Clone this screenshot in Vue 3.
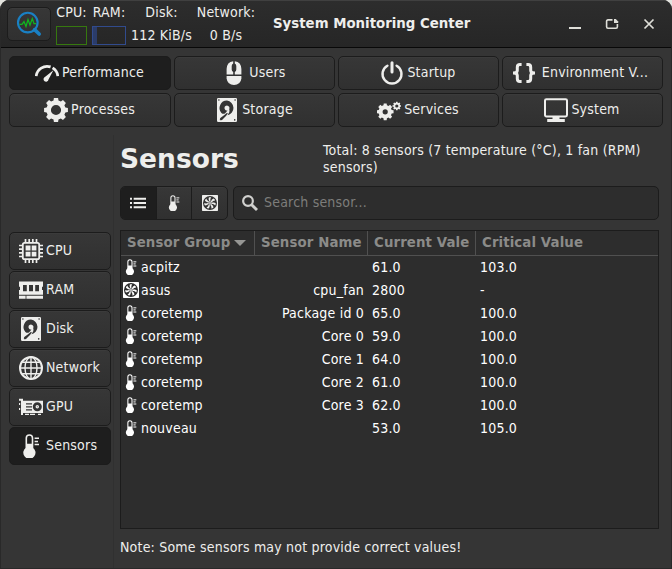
<script setup>
import { h } from 'vue'

const tabs = [
  { label: 'Performance', icon: 'gauge', active: true },
  { label: 'Users', icon: 'mouse' },
  { label: 'Startup', icon: 'power' },
  { label: 'Environment V...', icon: 'braces', wide: true },
  { label: 'Processes', icon: 'gear' },
  { label: 'Storage', icon: 'disk' },
  { label: 'Services', icon: 'gears' },
  { label: 'System', icon: 'monitor' },
]
const side = [
  { label: 'CPU', icon: 'cpu' },
  { label: 'RAM', icon: 'ram' },
  { label: 'Disk', icon: 'disk' },
  { label: 'Network', icon: 'globe' },
  { label: 'GPU', icon: 'gpu' },
  { label: 'Sensors', icon: 'thermo', active: true },
]
const rows = [
  ['acpitz', '', '61.0', '103.0'],
  ['asus', 'cpu_fan', '2800', '-'],
  ['coretemp', 'Package id 0', '65.0', '100.0'],
  ['coretemp', 'Core 0', '59.0', '100.0'],
  ['coretemp', 'Core 1', '64.0', '100.0'],
  ['coretemp', 'Core 2', '61.0', '100.0'],
  ['coretemp', 'Core 3', '62.0', '100.0'],
  ['nouveau', '', '53.0', '105.0'],
]

const fill = (d) => ['path', { d, fill: 'currentColor', 'fill-rule': 'evenodd' }]
const line = (d, w = 2, cap = 'butt') => [
  'path',
  { d, fill: 'none', stroke: 'currentColor', 'stroke-width': w, 'stroke-linecap': cap },
]
const ring = (cx, cy, r, w) => [
  'circle',
  { cx, cy, r, fill: 'none', stroke: 'currentColor', 'stroke-width': w },
]

// Closed outline of a cog with a round hole
function cog(cx, cy, outer, inner, hole, teeth = 8, phase = 0) {
  const pts = []
  const step = (Math.PI * 2) / teeth
  for (let i = 0; i < teeth; i++) {
    const a = i * step + phase
    for (const [o, r] of [[-0.33, inner], [-0.22, outer], [0.22, outer], [0.33, inner]]) {
      const t = a + o * step
      pts.push(`${(cx + r * Math.cos(t)).toFixed(2)} ${(cy + r * Math.sin(t)).toFixed(2)}`)
    }
  }
  return `M${pts.join('L')}ZM${cx - hole} ${cy}a${hole} ${hole} 0 1 0 ${hole * 2} 0a${hole} ${hole} 0 1 0 ${-hole * 2} 0Z`
}

const blades = Array.from({ length: 7 }, (_, i) => [
  'path',
  {
    d: 'M11.3 9.8C10.1 7.5 9.5 5.5 10.3 3.6C11.6 3.1 12.8 3.2 13.8 3.7C12.5 5.2 12.3 7.4 12.8 9.5Z',
    fill: 'currentColor',
    transform: `rotate(${(i * 360) / 7} 12 12)`,
  },
])

const icons = {
  gauge: [
    line('M1.2 15.2A11 11 0 0 1 15.6 5.9', 2.7),
    line('M17.6 6.8A11 11 0 0 1 22.8 15.2', 2.7),
    fill('M18.4 9.2L13.5 18.6A2.5 2.5 0 1 1 9.9 16Z'),
  ],
  mouse: [
    fill('M11.2 0.2V2.6Q9.7 3.3 9.7 5V8.4Q9.7 10.3 11.2 10.9V13.5H4.6V8Q4.8 1 11.2 0.2ZM12.8 0.2Q19.2 1 19.4 8V13.5H12.8V10.9Q14.3 10.3 14.3 8.4V5Q14.3 3.3 12.8 2.6Z'),
    fill('M4.6 15H19.4V17.5Q18.5 24 12 24Q5.5 24 4.6 17.5Z'),
  ],
  power: [line('M7.4 4.7A9.5 9.5 0 1 0 16.6 4.7', 2.4, 'round'), line('M12 1.8V11', 3, 'round')],
  braces: [
    line('M9.6 3.6H8Q5.3 3.6 5.3 6.3V9.5Q5.3 12 1 12Q5.3 12 5.3 14.5V17.7Q5.3 20.4 8 20.4H9.6', 3),
    line('M14.4 3.6H16Q18.7 3.6 18.7 6.3V9.5Q18.7 12 23 12Q18.7 12 18.7 14.5V17.7Q18.7 20.4 16 20.4H14.4', 3),
  ],
  gear: [fill(cog(12, 12, 12.1, 9.7, 5.1))],
  gears: [fill(cog(8.2, 13.8, 8.5, 6.7, 2.6)), fill(cog(19.8, 8, 4.4, 3.4, 1.6))],
  disk: [
    fill('M3.2 0H20.8Q22 0 22 1.2V22.8Q22 24 20.8 24H3.2Q2 24 2 22.8V1.2Q2 0 3.2 0ZM12 2.6A7.4 7.4 0 0 0 6.4 14.9Q8.4 16.6 10.2 15.2L12.5 12.5A2.5 2.5 0 1 1 14.2 11.2Q14.7 12.4 14.3 14.2L12.5 17.2A7.4 7.4 0 0 0 12 2.6ZM12 14.8Q9.2 17.5 5.3 20Q3.9 21.4 5.8 22.4Q7.5 22 8.5 20.5Q11 18.5 12.8 15.5ZM3.1 2A.8.8 0 1 0 4.7 2A.8.8 0 1 0 3.1 2ZM19.3 2A.8.8 0 1 0 20.9 2A.8.8 0 1 0 19.3 2ZM18.9 21.9A.8.8 0 1 0 20.5 21.9A.8.8 0 1 0 18.9 21.9Z'),
  ],
  monitor: [
    ['rect', { x: 1, y: 1.2, width: 22, height: 17.2, rx: 1.4, fill: 'none', stroke: 'currentColor', 'stroke-width': 2 }],
    fill('M8.5 18.5H15.5V21H20.8V24H3.2V21H8.5Z'),
  ],
  cpu: [
    line('M6.5 0V4M10.2 0V4M13.8 0V4M17.5 0V4M6.5 20V24M10.2 20V24M13.8 20V24M17.5 20V24M0 6.5H4M0 10.2H4M0 13.8H4M0 17.5H4M20 6.5H24M20 10.2H24M20 13.8H24M20 17.5H24', 1.7),
    ['rect', { x: 3.8, y: 3.8, width: 16.4, height: 16.4, rx: 1.8, fill: 'none', stroke: 'currentColor', 'stroke-width': 1.8 }],
    fill('M6.6 6.6H11.5V11.5H6.6ZM12.7 6.6H17.4V11.5H12.7ZM6.6 12.7H11.5V17.4H6.6ZM12.7 12.7H17.4V17.4H12.7Z'),
  ],
  ram: [
    fill('M0 3.5H24V8.8H23V12H24V16.7H0V12H1V8.8H0ZM4 7H7.8V13.3H4ZM10 7H14V13.3H10ZM16.2 7H20V13.3H16.2Z'),
    fill('M0 17.8H6.6V20.8H0ZM7.4 17.8H24V20.8H7.4Z'),
  ],
  globe: [
    ring(12, 12, 11, 2),
    line('M12 1V23M1 12H23M3.3 6.3H20.7M3.3 17.7H20.7', 1.4),
    ['ellipse', { cx: 12, cy: 12, rx: 6, ry: 11, fill: 'none', stroke: 'currentColor', 'stroke-width': 1.4 }],
  ],
  gpu: [
    fill('M0 3.8H4V5.7H24V18H4V20H2V5.7H0ZM7 8.2H13V9.5H7ZM7 11.2H13V12.5H7ZM7 14.2H13V15.5H7ZM18.3 7.2A4.5 4.5 0 1 0 18.3 16.2A4.5 4.5 0 1 0 18.3 7.2Z'),
    ring(18.3, 11.7, 1.1, 1.3),
    fill('M0 8H1.2V10H0ZM0 13H1.2V15H0ZM6 18.8H10V20H6ZM11 18.8H16V20H11ZM19 18.8H22V20H19Z'),
  ],
  thermo: [
    ['rect', { x: 7.3, y: 1, width: 6.2, height: 17, rx: 3.1, fill: 'none', stroke: 'currentColor', 'stroke-width': 1.6 }],
    fill('M7.4 9.7H13.4V13.4A6.1 6.1 0 1 1 7.4 13.4Z'),
    line('M15.6 4.3H20M15.6 7.4H19M15.6 10.5H20', 1.5),
  ],
  fan: [
    fill('M1 0H23Q24 0 24 1V23Q24 24 23 24H1Q0 24 0 23V1Q0 0 1 0ZM12 1.5A10.5 10.5 0 1 0 12 22.5A10.5 10.5 0 1 0 12 1.5Z'),
    ...blades,
    ring(12, 12, 1.6, 1.3),
  ],
  list: [fill('M0 4H3V7H0ZM5.5 4H24V7H5.5ZM0 10.5H3V13.5H0ZM5.5 10.5H24V13.5H5.5ZM0 17H3V20H0ZM5.5 17H24V20H5.5Z')],
  search: [ring(9, 9, 7.3, 3.3), line('M14.5 14.5L22.5 22.5', 4.4)],
}

const Icon = (props) =>
  h(
    'svg',
    { viewBox: '0 0 24 24', width: props.size || 24, height: props.size || 24, 'aria-hidden': 'true' },
    icons[props.name].map(([tag, attrs]) => h(tag, attrs)),
  )
Icon.props = ['name', 'size']
</script>

<template>
  <div class="window">
    <header class="titlebar">
      <button class="btn app">
        <svg width="28" height="28" viewBox="0 0 28 28">
          <path d="M19.6 19.6L24.2 24" stroke="#1a80c4" stroke-width="3.6" stroke-linecap="round" />
          <circle cx="12.8" cy="12.6" r="9.8" fill="none" stroke="#1a80c4" stroke-width="2.1" />
          <path d="M4.5 14.3H7L9 11.5L11 16.5L13 9.5L15 15L17.3 8.6L19 13.6H21" fill="none" stroke="#10b51f" stroke-width="1.3" />
        </svg>
      </button>
      <div class="stats">
        <div class="stat cpu"><span>CPU:</span><i class="graph green"></i></div>
        <div class="stat ram"><span>RAM:</span><i class="graph blue"></i></div>
        <div class="stat io"><span>Disk:</span><span>112 KiB/s</span></div>
        <div class="stat net"><span>Network:</span><span>0 B/s</span></div>
      </div>
      <h1>System Monitoring Center</h1>
      <div class="controls">
        <svg width="12" height="12" viewBox="0 0 12 12"><path d="M0 10H12" stroke="#deded8" stroke-width="2" /></svg>
        <svg width="14" height="12" viewBox="0 0 14 12"><path d="M7.5 1.9H3Q1.6 1.9 1.6 3.3V8.8Q1.6 10.2 3 10.2H11Q12.4 10.2 12.4 8.8V6" fill="none" stroke="#deded8" stroke-width="1.6" /><path d="M9 1H10.8L13.2 3.4V5H9Z" fill="#deded8" /></svg>
        <svg width="12" height="12" viewBox="0 0 12 12"><path d="M1.5 1.5L10.5 10.5M10.5 1.5L1.5 10.5" stroke="#deded8" stroke-width="1.7" /></svg>
      </div>
    </header>

    <nav class="tabs">
      <button v-for="t in tabs" :key="t.label" class="btn tab" :class="{ active: t.active, wide: t.wide }">
        <Icon :name="t.icon" /><span>{{ t.label }}</span>
      </button>
    </nav>

    <div class="body">
      <aside>
        <button v-for="s in side" :key="s.label" class="btn item" :class="{ active: s.active }">
          <Icon :name="s.icon" /><span>{{ s.label }}</span>
        </button>
      </aside>
      <main>
        <div class="heading">
          <h2>Sensors</h2>
          <p>Total: 8 sensors (7 temperature (°C), 1 fan (RPM)<br />sensors)</p>
        </div>
        <div class="tools">
          <div class="btn group">
            <span class="seg on"><Icon name="list" size="16" /></span>
            <span class="seg"><Icon name="thermo" size="16" /></span>
            <span class="seg"><Icon name="fan" size="16" /></span>
          </div>
          <div class="search"><Icon name="search" size="16" /><span>Search sensor...</span></div>
        </div>
        <div class="table">
          <div class="row head">
            <span class="sorted">Sensor Group<i class="arrow"></i></span>
            <span>Sensor Name</span><span>Current Vale</span><span>Critical Value</span>
          </div>
          <div v-for="(r, i) in rows" :key="i" class="row">
            <span class="name"><Icon :name="r[0] === 'asus' ? 'fan' : 'thermo'" size="16" />{{ r[0] }}</span>
            <span class="right">{{ r[1] }}</span>
            <span>{{ r[2] }}</span>
            <span>{{ r[3] }}</span>
          </div>
        </div>
        <p class="note">Note: Some sensors may not provide correct values!</p>
      </main>
    </div>
  </div>
</template>

<style>
body {
  margin: 0;
  background: #e4e4df;
}
</style>

<style scoped>
* {
  box-sizing: border-box;
}
.window {
  width: 672px;
  height: 569px;
  display: flex;
  flex-direction: column;
  overflow: hidden;
  background: #353535;
  border: 1px solid #292929;
  border-top: 0;
  border-radius: 9px 9px 0 0;
  color: #eeeeec;
  font: 14px/17px 'DejaVu Sans Condensed', 'DejaVu Sans', sans-serif;
  font-stretch: condensed;
  letter-spacing: 0.2px;
}
svg {
  display: block;
  flex: none;
}
h1,
h2,
p {
  margin: 0;
}
.btn {
  display: flex;
  align-items: center;
  margin: 0;
  padding: 0;
  border: 1px solid #1c1c1c;
  border-radius: 5px;
  background: linear-gradient(#373737, #303030);
  box-shadow: inset 0 1px #3b3b3b;
  color: inherit;
  font: inherit;
  letter-spacing: inherit;
  white-space: nowrap;
}
.btn > span:not(.seg) {
  padding-bottom: 2px;
}
.btn.active {
  background: #1e1e1e;
  box-shadow: none;
}
.titlebar {
  flex: none;
  display: flex;
  align-items: center;
  height: 48px;
  padding: 0 16px 0 6px;
  border-bottom: 1px solid #080808;
  background: linear-gradient(#2d2d2d, #262626);
  box-shadow: inset 0 1px #404040;
}
.app {
  width: 44px;
  height: 34px;
  justify-content: center;
}
.stats {
  display: flex;
  width: 222px;
  height: 47px;
  padding: 4px 0 0 5px;
}
.stat {
  display: flex;
  flex-direction: column;
  align-items: center;
  white-space: nowrap;
}
.stat span + span {
  margin-top: 6px;
}
.cpu {
  width: 31px;
  margin-right: 5px;
}
.ram {
  width: 34px;
  margin-right: 5px;
}
.io {
  width: 61px;
  margin-right: 4px;
}
.net {
  width: 60px;
}
.graph {
  width: 100%;
  height: 19px;
  margin-top: 5px;
}
.green {
  border: 1px solid #36780f;
}
.blue {
  border: 1px solid #314b8d;
  background: linear-gradient(90deg, #2b3c69 4px, transparent 4px);
}
h1,
h2,
.row.head {
  font-family: 'DejaVu Sans', sans-serif;
  font-stretch: normal;
  letter-spacing: 0;
}
h1 {
  font-size: 13.33px;
  line-height: 18px;
  white-space: nowrap;
}
.controls {
  display: flex;
  justify-content: space-between;
  width: 86px;
  margin: 1px 0 0 auto;
}
.tabs {
  flex: none;
  display: grid;
  grid-template-columns: 162px 161px 161px 161px;
  gap: 3px;
  padding: 8px 8px 0;
}
.tab {
  height: 34px;
  gap: 3px;
  padding-right: 1px;
  justify-content: center;
}
.tab.wide {
  gap: 6px;
  padding-right: 5px;
}
.body {
  flex: 1;
  display: flex;
}
aside {
  flex: none;
  width: 113px;
  display: flex;
  flex-direction: column;
  gap: 1px;
  margin-top: 8px;
  padding: 97px 2px 0 8px;
  border-right: 1px solid #303030;
}
.item {
  height: 38px;
  gap: 3px;
  padding-left: 9px;
}
main {
  flex: 1;
  display: flex;
  flex-direction: column;
  padding: 13px 12px 0 6px;
}
.heading {
  display: flex;
  height: 46px;
}
h2 {
  width: 203px;
  padding-top: 3px;
  font-size: 26.5px;
  line-height: 31px;
}
.heading p {
  padding-top: 2px;
  white-space: nowrap;
}
.tools {
  display: flex;
  gap: 5px;
  height: 34px;
}
.group {
  width: 108px;
  overflow: hidden;
}
.seg {
  flex: 1;
  height: 32px;
  display: flex;
  align-items: center;
  justify-content: center;
  border-left: 1px solid #1c1c1c;
}
.seg.on {
  border-left: 0;
  background: #1e1e1e;
}
.search {
  flex: 1;
  display: flex;
  align-items: center;
  gap: 6px;
  padding-left: 8px;
  border: 1px solid #1c1c1c;
  border-radius: 5px;
  background: #2d2d2d;
  color: #d0d0ce;
}
.search span {
  padding-bottom: 2px;
  color: #7d7d7b;
}
.table {
  height: 299px;
  margin-top: 10px;
  border: 1px solid #1c1c1c;
  background: #2d2d2d;
  color: #fff;
}
.row {
  display: grid;
  grid-template-columns: 134px 113px 108px 1fr;
  height: 23px;
  line-height: 22px;
}
.row span {
  padding-left: 4px;
  white-space: nowrap;
}
.row .name {
  display: flex;
  align-items: center;
  gap: 2px;
  height: 22px;
  padding-left: 2px;
}
.row .right {
  padding: 0 4px 0 0;
  text-align: right;
}
.row.head {
  height: 25px;
  border-bottom: 1px solid #505050;
  color: #8b8b89;
  font-size: 13.33px;
  font-weight: bold;
  line-height: 23px;
  letter-spacing: 0.1px;
}
.row.head span {
  padding-left: 6px;
  border-right: 1px solid #505050;
}
.row.head span:last-child {
  border-right: 0;
}
.row .sorted {
  display: flex;
  gap: 4px;
}
.arrow {
  align-self: center;
  border: 6px solid transparent;
  border-top-color: #969694;
  border-bottom: 0;
}
.note {
  margin-top: 10px;
}
</style>
